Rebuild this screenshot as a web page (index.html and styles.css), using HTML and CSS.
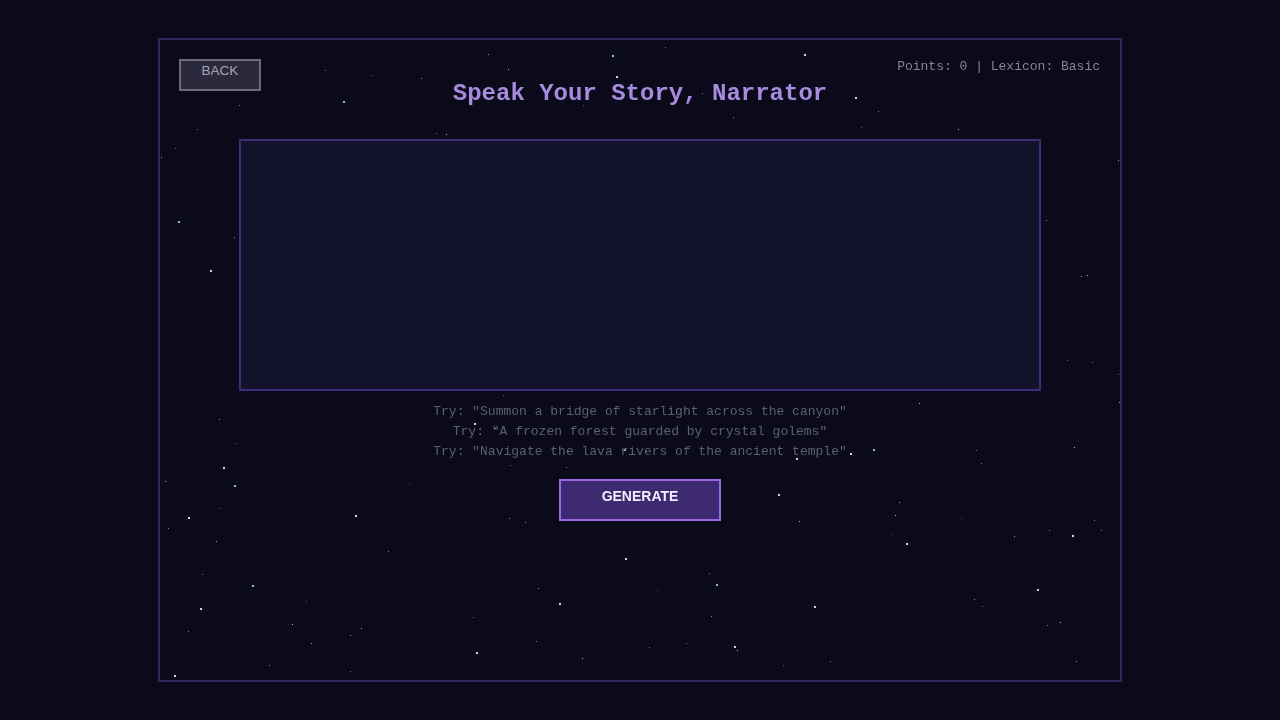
FILE: index.html
```html
<!DOCTYPE html>
<html lang="en">
<head>
    <meta charset="UTF-8">
    <meta name="viewport" content="width=device-width, initial-scale=1.0">
    <title>Speak Your Story</title>
    <link rel="stylesheet" href="styles.css">
</head>
<body>
    <div class="game">
        <canvas id="stars" width="960" height="640"></canvas>
        <button class="back-btn">BACK</button>
        <div class="hud">Points: 0 | Lexicon: Basic</div>

        <div class="narrate">
            <h1>Speak Your Story, Narrator</h1>
            <textarea class="story-input"></textarea>
            <div class="hints">
                <p>Try: "Summon a bridge of starlight across the canyon"</p>
                <p>Try: "A frozen forest guarded by crystal golems"</p>
                <p>Try: "Navigate the lava rivers of the ancient temple"</p>
            </div>
            <button class="generate-btn">GENERATE</button>
        </div>
    </div>
    <script>
        // Starfield behind the narration screen (page coords, offset by the frame)
        const stars = [
            [612,55,2],[804,54,2],[616,76,2],[343,101,2],[855,97,2],[733,117,1],[436,133,1],[446,134,1],
            [197,129,1],[175,148,1],[161,157,1],[958,129,1],[861,127,1],[878,111,1],[1118,160,1],
            [178,221,2],[210,270,2],[1046,220,1],[1081,276,1],[1087,275,1],[1067,360,1],[1118,374,1],
            [1119,402,1],[919,403,1],[503,395,1],[474,423,2],[495,428,1],[219,419,1],[235,443,1],
            [223,467,2],[234,485,2],[165,481,1],[188,517,2],[220,508,1],[216,541,1],[355,515,2],
            [409,484,1],[388,551,1],[509,518,1],[525,522,1],[510,465,1],[566,467,1],[624,449,2],
            [796,458,2],[850,453,2],[873,449,2],[778,494,2],[799,521,1],[891,534,1],[906,543,2],
            [1014,536,1],[1049,530,1],[1072,535,2],[1094,520,1],[1101,530,1],[625,558,2],[709,573,1],
            [716,584,2],[538,588,1],[559,603,2],[657,590,1],[711,616,1],[814,606,2],[974,599,1],
            [982,606,1],[1037,589,2],[1047,625,1],[1060,622,1],[202,574,1],[252,585,2],[200,608,2],
            [292,624,1],[306,601,1],[188,631,1],[311,643,1],[350,635,1],[473,617,1],[476,652,2],
            [536,641,1],[582,658,1],[649,647,1],[686,643,1],[734,646,2],[737,650,1],[783,665,1],
            [830,661,1],[1076,661,1],[269,665,1],[350,671,1],[174,675,2],[239,105,1],[251,90,1],
            [325,70,1],[371,75,1],[421,78,1],[508,69,1],[583,105,1],[702,93,1],[604,139,1],[488,54,1],
            [665,47,1],[234,237,1],[1092,362,1],[1074,447,1],[976,450,1],[981,463,1],[899,502,1],
            [895,515,1],[961,518,1],[168,528,1],[361,628,1]
        ];
        const ctx = document.getElementById('stars').getContext('2d');
        stars.forEach(([x, y, s], i) => {
            const blue = i % 3 === 0;
            const alpha = s > 1 ? 0.9 : 0.45 + (i % 4) * 0.1;
            ctx.fillStyle = blue ? `rgba(150, 200, 255, ${alpha})` : `rgba(230, 230, 255, ${alpha})`;
            ctx.fillRect(x - 160, y - 40, s, s);
        });
    </script>
</body>
</html>
```

FILE: styles.css
```css
/* Narration screen: dark night sky, purple accents, monospace copy */
body {
    margin: 0;
    min-height: 100vh;
    background-color: #0b0a1a;
    display: flex;
    justify-content: center;
    align-items: center;
    font-family: 'Liberation Mono', monospace;
}

.game {
    position: relative;
    width: 960px;
    height: 640px;
    border: 2px solid #35265f;
    background-color: #0b0a1a;
}

#stars {
    position: absolute;
    left: 0;
    top: 0;
    pointer-events: none;
}

.back-btn {
    position: absolute;
    top: 19px;
    left: 19px;
    width: 82px;
    height: 32px;
    padding: 1px 0 0;
    display: flex;
    justify-content: center;
    align-items: flex-start;
    background-color: #2b2a3c;
    border: 2px solid #6b6a7e;
    color: #a5a5b6;
    font-family: 'Liberation Sans', Arial, sans-serif;
    font-size: 13.5px;
    line-height: 18px;
    cursor: pointer;
}

.hud {
    position: absolute;
    top: 19px;
    right: 20px;
    color: #858596;
    font-size: 13px;
    line-height: 16px;
}

.narrate {
    position: relative;
    display: flex;
    flex-direction: column;
    align-items: center;
    padding-top: 40px;
}

h1 {
    margin: 0;
    color: #a78bdf;
    font-size: 24px;
    line-height: 28px;
    font-weight: 700;
}

.story-input {
    box-sizing: border-box;
    width: 802px;
    height: 252px;
    margin-top: 31px;
    background-color: #12122b;
    border: 2px solid #3c2d78;
    resize: none;
    outline: none;
}

.hints {
    margin-top: 11px;
    text-align: center;
}

.hints p {
    margin: 0;
    color: #5b6070;
    font-size: 13px;
    line-height: 20px;
}

.generate-btn {
    box-sizing: border-box;
    width: 162px;
    height: 42px;
    margin-top: 17px;
    padding: 6px 0 0;
    display: flex;
    justify-content: center;
    align-items: flex-start;
    background-color: #3d2a70;
    border: 2px solid #9a66e6;
    color: #f2eeff;
    font-family: 'Liberation Sans', Arial, sans-serif;
    font-size: 14px;
    line-height: 18px;
    font-weight: 700;
    cursor: pointer;
}
```
